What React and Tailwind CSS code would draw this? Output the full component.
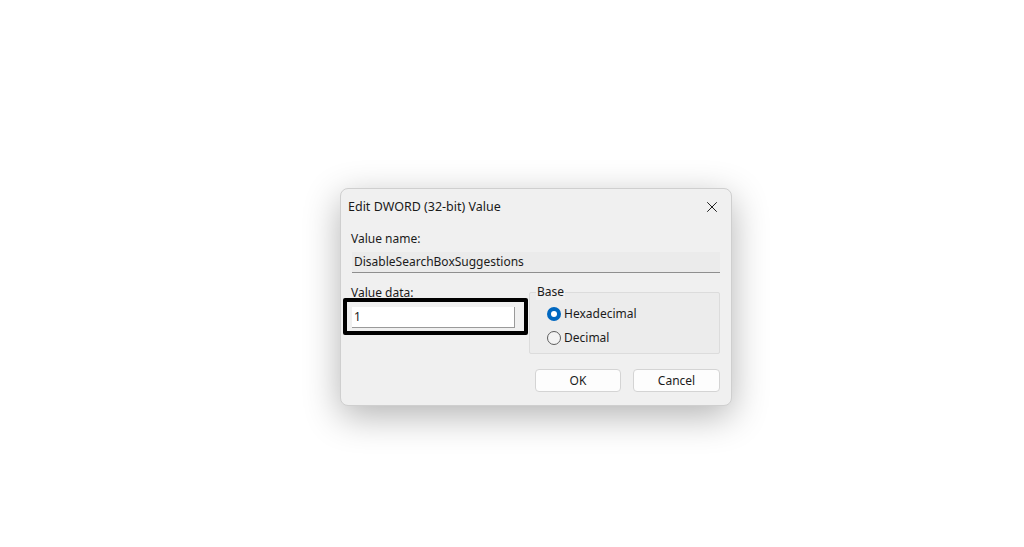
import { X } from 'lucide-react';

function Radio({ checked, label }) {
  return (
    <div className="flex items-center h-[16px]">
      {checked ? (
        <span className="w-[14px] h-[14px] rounded-full bg-[#0067c0] flex items-center justify-center">
          <span className="w-[6px] h-[6px] rounded-full bg-white" />
        </span>
      ) : (
        <span className="w-[14px] h-[14px] rounded-full border border-[#5d5d5d] bg-[#f3f3f3]" />
      )}
      <span className="ml-[3px] text-[12px] text-[#1b1b1b]">{label}</span>
    </div>
  );
}

export default function App() {
  return (
    <div
      className="min-h-screen bg-white pt-[188px] pl-[340px]"
      style={{ fontFamily: '"Noto Sans", "Liberation Sans", sans-serif' }}
    >
      <div className="w-[392px] h-[218px] rounded-[8px] bg-[#f0f0f0] border border-[#cfcfcf] shadow-[0_10px_36px_rgba(0,0,0,0.3)] flex flex-col">
        {/* title bar */}
        <div className="h-[35px] flex items-center justify-between pl-[7px] pr-[10px]">
          <span className="text-[12.5px] text-[#1a1a1a] mt-[1px]">Edit DWORD (32-bit) Value</span>
          <X size={18} strokeWidth={1.3} className="text-[#1a1a1a]" />
        </div>

        <div className="pl-[10px] pr-[11px] flex flex-col">
          <div className="mt-[7px] h-[16px] text-[12px] leading-[16px] text-[#1b1b1b]">Value name:</div>
          <div className="mt-[5px] ml-[1px] h-[21px] bg-[#ebebeb] border-b border-[#8f8f8f] flex items-center pl-[2px] text-[12px] text-[#1b1b1b]">
            DisableSearchBoxSuggestions
          </div>

          <div className="mt-[12px] flex">
            <div className="w-[177px] relative">
              <div className="h-[16px] text-[12px] leading-[16px] text-[#1b1b1b]">Value data:</div>
              <div className="mt-[6px] ml-[1px] w-[163px] h-[21px] bg-white border-b border-r border-[#9a9a9a] flex items-center pl-[2px] text-[12px] text-[#1b1b1b]">
                1
              </div>
              <div className="absolute left-[-8px] top-[13px] w-[185px] h-[37px] border-[4px] border-black rounded-[2px]" />
            </div>
            <div className="ml-[1px] flex-1 relative mt-[7px] h-[62px] bg-[#ececec] border border-[#dcdcdc] rounded-[2px] pl-[17px] pt-[13px] flex flex-col gap-[8px]">
              <span className="absolute left-[6px] top-[-9px] bg-[#f0f0f0] px-[1px] text-[12px] leading-[16px] text-[#1b1b1b]">Base</span>
              <Radio checked label="Hexadecimal" />
              <Radio label="Decimal" />
            </div>
          </div>

          <div className="mt-[15px] flex justify-end gap-[12px]">
            <button className="w-[86px] h-[23px] bg-[#fdfdfd] border border-[#d4d4d4] rounded-[4px] text-[12px] text-[#1b1b1b]">
              OK
            </button>
            <button className="w-[87px] h-[23px] bg-[#fdfdfd] border border-[#d4d4d4] rounded-[4px] text-[12px] text-[#1b1b1b]">
              Cancel
            </button>
          </div>
        </div>
      </div>
    </div>
  );
}
